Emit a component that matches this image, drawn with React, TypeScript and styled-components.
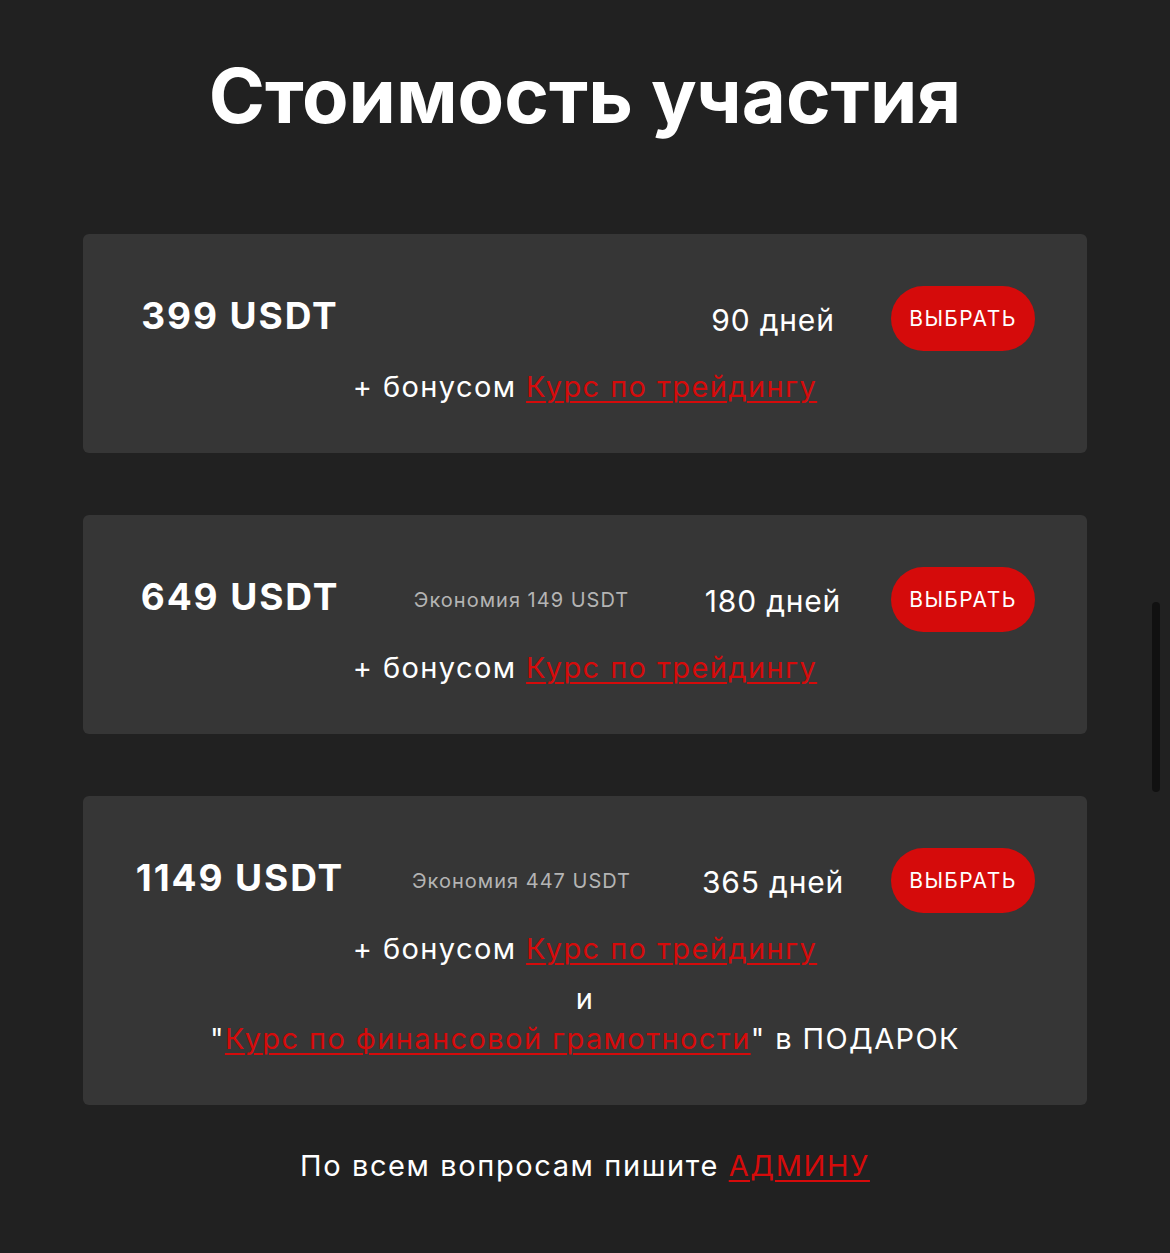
import * as React from 'react'
import styled, { createGlobalStyle } from 'styled-components'

const GlobalStyle = createGlobalStyle`
  html, body {
    margin: 0;
    padding: 0;
    background: #212121;
  }
  body {
    font-family: Inter, "Noto Sans", "DejaVu Sans", sans-serif;
    color: #ffffff;
  }
`

const Page = styled.main`
  min-height: 1253px;
  box-sizing: border-box;
  padding: 50px 0 67px;
  background: #212121;
`

const Title = styled.h2`
  margin: 0 0 93px;
  text-align: center;
  font-size: 76px;
  line-height: 91px;
  font-weight: 700;
`

const PlanList = styled.section`
  width: 1004px;
  margin: 0 auto;
  display: grid;
  gap: 62px;
`

const Card = styled.article`
  background: #363636;
  border-radius: 6px;
  padding: 52px 52px 46px;
`

const Row = styled.div`
  display: grid;
  grid-template-columns: 210px 353px 150px 1fr;
  align-items: center;
  justify-items: center;
  height: 65px;

  & > :last-child {
    justify-self: end;
  }
`

const Price = styled.div`
  font-size: 37px;
  font-weight: 700;
  letter-spacing: 1.9px;
  margin-bottom: 7px;
  white-space: nowrap;
`

const Saving = styled.div`
  font-size: 20px;
  letter-spacing: 1px;
  color: #b4b4b4;
  white-space: nowrap;
`

const Days = styled.div`
  font-size: 30px;
  letter-spacing: 0.8px;
  white-space: nowrap;
  margin-top: 2px;
`

const ChooseButton = styled.button`
  width: 144px;
  height: 65px;
  border: none;
  border-radius: 33px;
  background: #d50b0b;
  color: #fff;
  font-family: inherit;
  font-size: 21px;
  letter-spacing: 1.4px;
  cursor: pointer;
`

const Line = styled.p<{ $gap?: number }>`
  margin: ${p => p.$gap ?? 0}px 0 0;
  text-align: center;
  font-size: 29px;
  letter-spacing: 1.4px;
  line-height: 40px;
`

const Link = styled.a`
  color: #d50b0b;
  text-decoration: underline;
  text-decoration-thickness: 2px;
  text-underline-offset: 4px;
`

const Footer = styled.p`
  margin: 41px 0 0;
  text-align: center;
  font-size: 29px;
  letter-spacing: 1.6px;
  line-height: 40px;
`

const ScrollThumb = styled.div`
  position: fixed;
  top: 602px;
  right: 10px;
  width: 8px;
  height: 190px;
  border-radius: 4px;
  background: #111111;
`

type Plan = {
  price: string
  saving?: string
  days: string
  gift?: boolean
}

const plans: Plan[] = [
  { price: '399 USDT', days: '90 дней' },
  { price: '649 USDT', saving: 'Экономия 149 USDT', days: '180 дней' },
  { price: '1149 USDT', saving: 'Экономия 447 USDT', days: '365 дней', gift: true },
]

const PlanCard: React.FC<{ plan: Plan }> = ({ plan }) => (
  <Card>
    <Row>
      <Price>{plan.price}</Price>
      <Saving>{plan.saving}</Saving>
      <Days>{plan.days}</Days>
      <ChooseButton>ВЫБРАТЬ</ChooseButton>
    </Row>
    <Line $gap={16}>
      + бонусом <Link href="#">Курс по трейдингу</Link>
    </Line>
    {plan.gift && (
      <>
        <Line $gap={10}>и</Line>
        <Line>
          "<Link href="#">Курс по финансовой грамотности</Link>" в ПОДАРОК
        </Line>
      </>
    )}
  </Card>
)

export default function App() {
  return (
    <Page>
      <GlobalStyle />
      <Title>Стоимость участия</Title>
      <PlanList>
        {plans.map(plan => (
          <PlanCard key={plan.price} plan={plan} />
        ))}
      </PlanList>
      <Footer>
        По всем вопросам пишите <Link href="#">АДМИНУ</Link>
      </Footer>
      <ScrollThumb />
    </Page>
  )
}
